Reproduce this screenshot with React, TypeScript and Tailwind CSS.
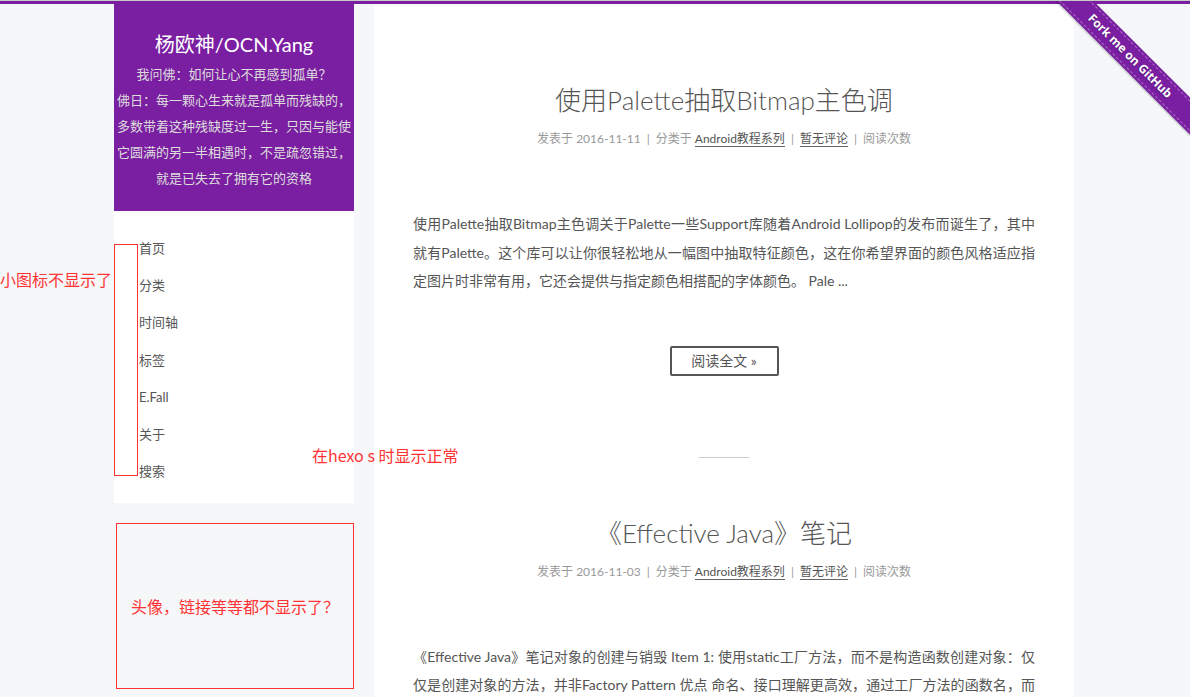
const navItems = ["首页", "分类", "时间轴", "标签", "E.Fall", "关于", "搜索"];

function PostMeta({ date }: { date: string }) {
  return (
    <div className="mt-[13px] text-[12px] leading-[18px] text-[#999]">
      <span>发表于 {date}</span>
      <span className="mx-[6px]">|</span>
      <span>分类于 </span>
      <span className="text-[#555] border-b border-[#666]">Android教程系列</span>
      <span className="mx-[6px]">|</span>
      <span className="text-[#555] border-b border-[#666]">暂无评论</span>
      <span className="mx-[6px]">|</span>
      <span>阅读次数</span>
    </div>
  );
}

function Excerpt({ lines, full = false }: { lines: string[]; full?: boolean }) {
  return (
    <div className="mt-[62px] text-left text-[14px] leading-[28.5px] text-[#555]">
      {lines.map((line, i) => (
        <div
          key={i}
          className={
            full || i < lines.length - 1
              ? "whitespace-nowrap text-justify [text-align-last:justify]"
              : "whitespace-nowrap"
          }
        >
          {line}
        </div>
      ))}
    </div>
  );
}

export default function App() {
  return (
    <div className="relative min-h-screen h-[697px] overflow-hidden bg-[#f5f7f9] font-[Lato,'Noto_Sans_CJK_SC',sans-serif]">
      <div className="h-px bg-[#c8c8c8]" />
      <div className="h-[3px] bg-[#7b1fa2]" />

      <div className="flex gap-[20px] pl-[114px]">
        {/* Sidebar */}
        <aside className="w-[240px] shrink-0">
          <div className="bg-[#7b1fa2] h-[207px] pt-[26px] text-center">
            <div className="text-[20px] leading-[28px] text-white">杨欧神/OCN.Yang</div>
            <div className="mt-[3px] text-[13px] leading-[26px] text-[#ddd]">
              <div className="whitespace-nowrap">我问佛：如何让心不再感到孤单？</div>
              <div className="whitespace-nowrap">佛日：每一颗心生来就是孤单而残缺的，</div>
              <div className="whitespace-nowrap">多数带着这种残缺度过一生，只因与能使</div>
              <div className="whitespace-nowrap">它圆满的另一半相遇时，不是疏忽错过，</div>
              <div className="whitespace-nowrap">就是已失去了拥有它的资格</div>
            </div>
          </div>
          <nav className="bg-white h-[292px] pt-[19px]">
            {navItems.map((item) => (
              <div key={item} className="h-[37.2px] pl-[25px] text-[13px] leading-[37px] text-[#555]">
                {item}
              </div>
            ))}
          </nav>
        </aside>

        {/* Main */}
        <main className="w-[700px] shrink-0 bg-white min-h-[693px] px-[39px] pt-[80px] text-center">
          <article>
            <h1 className="text-[26px] leading-[33px] font-light text-[#555]">使用Palette抽取Bitmap主色调</h1>
            <PostMeta date="2016-11-11" />
            <Excerpt
              lines={[
                "使用Palette抽取Bitmap主色调关于Palette一些Support库随着Android Lollipop的发布而诞生了，其中",
                "就有Palette。这个库可以让你很轻松地从一幅图中抽取特征颜色，这在你希望界面的颜色风格适应指",
                "定图片时非常有用，它还会提供与指定颜色相搭配的字体颜色。 Pale ...",
              ]}
            />
            <div className="mt-[50px] flex justify-center">
              <div className="h-[30px] w-[109px] border-2 border-[#555] rounded-[2px] text-[14px] leading-[26px] text-[#555]">
                阅读全文 »
              </div>
            </div>
          </article>
          <div className="mx-auto mt-[81px] h-px w-[50px] bg-[#ccc]" />
          <article className="mt-[59px]">
            <h1 className="text-[26px] leading-[33px] font-light text-[#555]">《Effective Java》笔记</h1>
            <PostMeta date="2016-11-03" />
            <Excerpt
              full
              lines={[
                "《Effective Java》笔记对象的创建与销毁 Item 1: 使用static工厂方法，而不是构造函数创建对象：仅",
                "仅是创建对象的方法，并非Factory Pattern 优点 命名、接口理解更高效，通过工厂方法的函数名，而",
              ]}
            />
          </article>
        </main>
      </div>

      {/* Fork ribbon */}
      <div className="absolute top-px right-0 w-[149px] h-[149px] overflow-hidden">
        <div className="absolute left-[-21px] top-[42px] w-[220px] h-[26px] rotate-45 bg-[#7b1fa2] flex items-center justify-center shadow-[0_1px_2px_rgba(0,0,0,0.3)]">
          <div className="w-full h-[22px] border-y border-dashed border-[rgba(255,255,255,0.35)] text-center text-[12px] font-bold leading-[20px] text-white [text-shadow:0_1px_1px_rgba(0,0,0,0.4)] font-['Open_Sans',sans-serif]">
            Fork me on GitHub
          </div>
        </div>
      </div>

      {/* Red annotations */}
      <div className="absolute left-0 top-[269px] text-[16px] leading-[20px] text-[#ff3333] font-['Noto_Sans_CJK_SC',sans-serif] whitespace-nowrap">
        小图标不显示了
      </div>
      <div className="absolute left-[114px] top-[244px] w-[24px] h-[232px] border border-[#ff3333]" />
      <div className="absolute left-[312px] top-[445px] text-[16px] leading-[20px] text-[#ff3333] font-['Noto_Sans_CJK_SC',sans-serif] whitespace-nowrap">
        在hexo s 时显示正常
      </div>
      <div className="absolute left-[116px] top-[523px] w-[238px] h-[166px] border border-[#ff3333] flex items-center justify-center text-[16px] text-[#ff3333] font-['Noto_Sans_CJK_SC',sans-serif] whitespace-nowrap">
        头像，链接等等都不显示了？
      </div>
    </div>
  );
}
